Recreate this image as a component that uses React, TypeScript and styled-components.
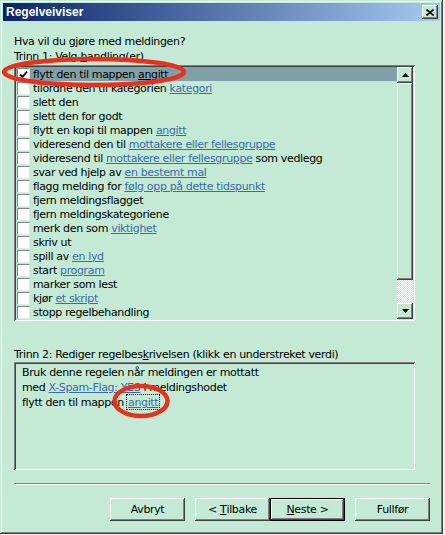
import React from 'react'
import styled, { createGlobalStyle } from 'styled-components'

const FACE = '#c4ead5'
const LINK = '#3a6aa8'

const raised = `inset -1px -1px #404040, inset 1px 1px #ffffff, inset -2px -2px #808080, inset 2px 2px ${FACE}`
const sunken = `inset 1px 1px #808080, inset -1px -1px #ffffff, inset 2px 2px #404040, inset -2px -2px ${FACE}`

const GlobalStyle = createGlobalStyle`
  body {
    margin: 0;
    background: #f0f0f0;
    font-family: "DejaVu Sans", Verdana, sans-serif;
    font-size: 11px;
    letter-spacing: -0.35px;
    color: #000;
  }
`

const Window = styled.div`
  position: relative;
  box-sizing: border-box;
  width: 443px;
  height: 534px;
  padding: 3px;
  display: flex;
  flex-direction: column;
  background: ${FACE};
  box-shadow: inset -1px -1px #404040, inset 1px 1px ${FACE}, inset -2px -2px #808080, inset 2px 2px #ffffff;
`

const TitleBar = styled.div`
  height: 18px;
  display: flex;
  align-items: center;
  justify-content: space-between;
  padding: 0 2px 0 3px;
  background: linear-gradient(to right, #0a246a, #a6caf0);
  color: #fff;
  font-family: "Liberation Sans", Arial, sans-serif;
  letter-spacing: 0;
  font-weight: bold;
  font-size: 12px;
`

const CloseButton = styled.div`
  box-sizing: border-box;
  width: 16px;
  height: 14px;
  display: flex;
  align-items: center;
  justify-content: center;
  background: ${FACE};
  box-shadow: ${raised};
`

const Content = styled.div`
  flex: 1;
  display: flex;
  flex-direction: column;
  padding: 13px 10px 0 11px;
`

const Prompt = styled.div`
  line-height: 15px;
`

const ListBox = styled.div`
  box-sizing: border-box;
  margin-top: 1px;
  width: 401px;
  height: 256px;
  padding: 2px;
  display: flex;
  box-shadow: ${sunken};
`

const Rows = styled.div`
  flex: 1;
  display: flex;
  flex-direction: column;
`

const Row = styled.div<{ $selected?: boolean }>`
  height: 14px;
  display: flex;
  align-items: center;
  gap: 3px;
  padding-left: 1px;
  white-space: nowrap;
  background: ${(p) => (p.$selected ? '#80a0a8' : 'transparent')};
`

const Check = styled.div`
  box-sizing: border-box;
  width: 13px;
  height: 13px;
  display: flex;
  align-items: center;
  justify-content: center;
  background: #fff;
  border: 1px solid;
  border-color: #7a8a84 #dfe9e4 #dfe9e4 #7a8a84;
`

const Link = styled.span<{ $plain?: boolean; $focus?: boolean }>`
  color: ${(p) => (p.$plain ? '#000' : LINK)};
  text-decoration: underline;
  ${(p) => (p.$focus ? 'outline: 1px dotted #000; padding: 1px 1px 0;' : '')}
`

const ScrollBar = styled.div`
  width: 16px;
  display: flex;
  flex-direction: column;
`

const ScrollButton = styled.div`
  box-sizing: border-box;
  height: 16px;
  display: flex;
  align-items: center;
  justify-content: center;
  background: ${FACE};
  box-shadow: ${raised};
`

const Thumb = styled.div`
  height: 197px;
  background: ${FACE};
  box-shadow: ${raised};
`

const Track = styled.div`
  flex: 1;
  background: repeating-conic-gradient(#ffffff 0 25%, ${FACE} 0 50%) 0 0 / 2px 2px;
`

const StepLabel = styled.div`
  margin-top: 27px;
  line-height: 14px;
`

const RuleBox = styled.div`
  box-sizing: border-box;
  width: 401px;
  height: 108px;
  padding: 3px 8px;
  box-shadow: ${sunken};
`

const RuleLine = styled.div`
  line-height: 15px;
  white-space: nowrap;
`

const Separator = styled.div`
  margin-top: 13px;
  border-top: 1px solid #808080;
  border-bottom: 1px solid #ffffff;
`

const ButtonRow = styled.div`
  margin-top: 13px;
  display: flex;
  justify-content: flex-end;
  gap: 10px;
`

const Pair = styled.div`
  display: flex;
`

const Button = styled.div<{ $default?: boolean }>`
  box-sizing: border-box;
  width: 75px;
  height: 23px;
  display: flex;
  align-items: center;
  justify-content: center;
  background: ${FACE};
  box-shadow: ${(p) => (p.$default ? `inset 0 0 0 1px #000, inset -2px -2px #404040, inset 2px 2px #fff, inset -3px -3px #808080` : raised)};
`

const Marks = styled.svg`
  position: absolute;
  left: 0;
  top: 0;
  pointer-events: none;
`

const Up = () => (
  <svg width="7" height="4" viewBox="0 0 7 4">
    <path d="M3.5 0 L7 4 L0 4 Z" fill="#000" />
  </svg>
)

const Down = () => (
  <svg width="7" height="4" viewBox="0 0 7 4">
    <path d="M0 0 L7 0 L3.5 4 Z" fill="#000" />
  </svg>
)

type Action = { text: React.ReactNode }

const actions: Action[] = [
  { text: <>tilordne den til kategorien <Link>kategori</Link></> },
  { text: 'slett den' },
  { text: 'slett den for godt' },
  { text: <>flytt en kopi til mappen <Link>angitt</Link></> },
  { text: <>videresend den til <Link>mottakere eller fellesgruppe</Link></> },
  { text: <>videresend til <Link>mottakere eller fellesgruppe</Link> som vedlegg</> },
  { text: <>svar ved hjelp av <Link>en bestemt mal</Link></> },
  { text: <>flagg melding for <Link>følg opp på dette tidspunkt</Link></> },
  { text: 'fjern meldingsflagget' },
  { text: 'fjern meldingskategoriene' },
  { text: <>merk den som <Link>viktighet</Link></> },
  { text: 'skriv ut' },
  { text: <>spill av <Link>en lyd</Link></> },
  { text: <>start <Link>program</Link></> },
  { text: 'marker som lest' },
  { text: <>kjør <Link>et skript</Link></> },
  { text: 'stopp regelbehandling' },
]

export default function App() {
  return (
    <>
      <GlobalStyle />
      <Window>
        <TitleBar>
          <span>Regelveiviser</span>
          <CloseButton>
            <svg width="8" height="7" viewBox="0 0 8 7">
              <path d="M0.5 0.5 L7.5 6.5 M7.5 0.5 L0.5 6.5" stroke="#000" strokeWidth="1.6" />
            </svg>
          </CloseButton>
        </TitleBar>
        <Content>
          <Prompt>Hva vil du gjøre med meldingen?</Prompt>
          <Prompt>
            Trinn 1: Velg <u>h</u>andling(er)
          </Prompt>
          <ListBox>
            <Rows>
              <Row $selected>
                <Check>
                  <svg width="9" height="9" viewBox="0 0 9 9">
                    <path d="M1 4.5 L3.5 7 L8 1.5" stroke="#000" strokeWidth="1.8" fill="none" />
                  </svg>
                </Check>
                <span>
                  flytt den til mappen <Link $plain>angitt</Link>
                </span>
              </Row>
              {actions.map((a, i) => (
                <Row key={i}>
                  <Check />
                  <span>{a.text}</span>
                </Row>
              ))}
            </Rows>
            <ScrollBar>
              <ScrollButton>
                <Up />
              </ScrollButton>
              <Thumb />
              <Track />
              <ScrollButton>
                <Down />
              </ScrollButton>
            </ScrollBar>
          </ListBox>
          <StepLabel>
            Trinn 2: Rediger regelbes<u>k</u>rivelsen (klikk en understreket verdi)
          </StepLabel>
          <RuleBox>
            <RuleLine>Bruk denne regelen når meldingen er mottatt</RuleLine>
            <RuleLine>
              med <Link>X-Spam-Flag: YES</Link> i meldingshodet
            </RuleLine>
            <RuleLine>
              flytt den til mappen <Link $focus>angitt</Link>
            </RuleLine>
          </RuleBox>
          <Separator />
          <ButtonRow>
            <Button>Avbryt</Button>
            <Pair>
              <Button>
                &lt;&nbsp;<u>T</u>ilbake
              </Button>
              <Button $default>
                <u>N</u>este &gt;
              </Button>
            </Pair>
            <Button>Fullfør</Button>
          </ButtonRow>
        </Content>
        <Marks width="443" height="534">
          <ellipse cx="94" cy="72" rx="90" ry="13" fill="none" stroke="#ea2f1a" strokeWidth="4.5" />
          <ellipse cx="141" cy="401" rx="26.5" ry="15" fill="none" stroke="#ea2f1a" strokeWidth="4.5" />
        </Marks>
      </Window>
    </>
  )
}
